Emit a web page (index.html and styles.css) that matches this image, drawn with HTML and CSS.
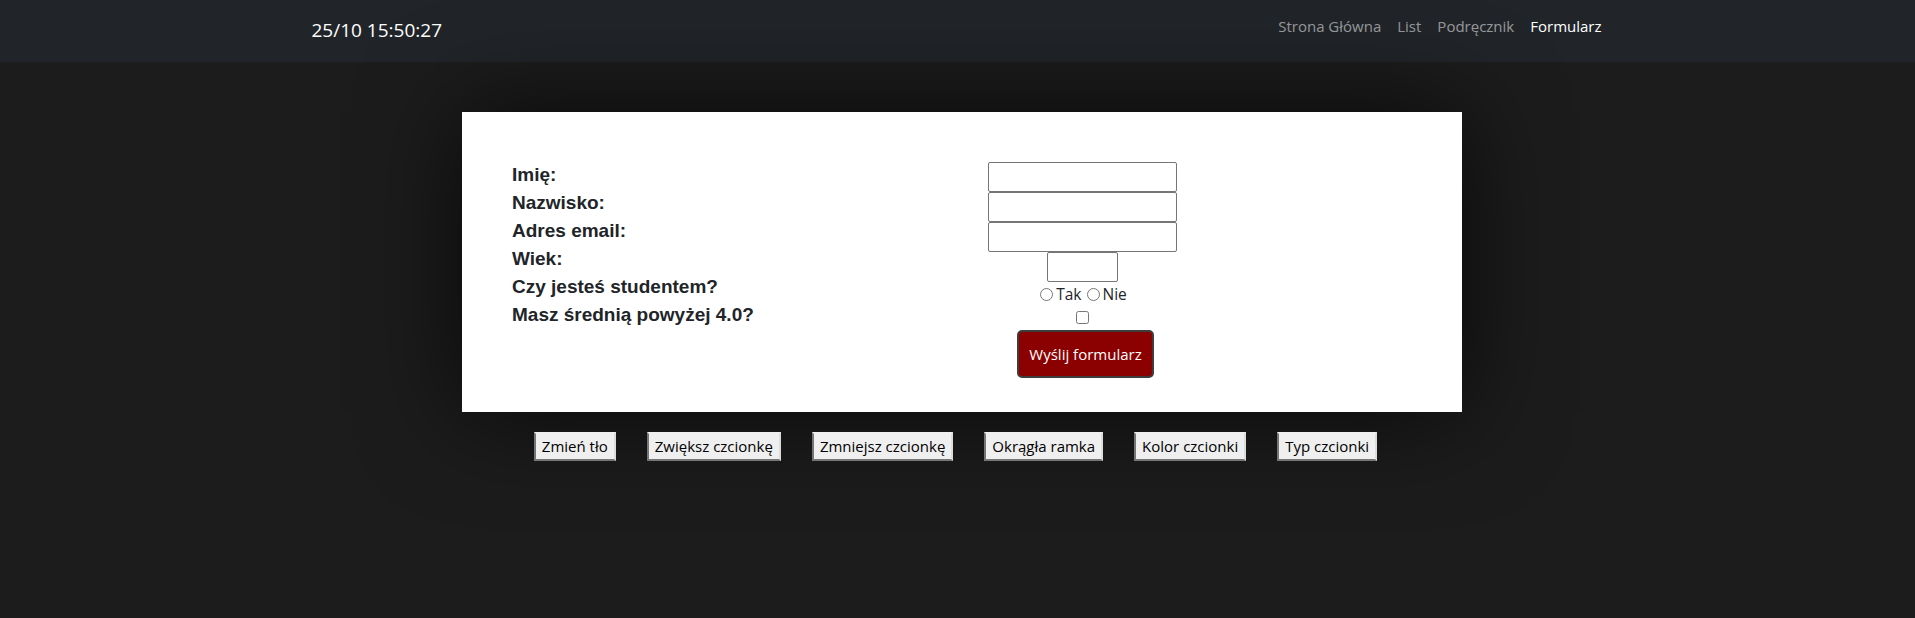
FILE: index.html
```html
<!DOCTYPE html>
<html lang="pl">
<head>
<meta charset="utf-8">
<title>Formularz</title>
<link rel="stylesheet" href="styles.css">
</head>
<body>
<nav class="navbar">
  <div class="nav-container">
    <div class="brand">25/10 15:50:27</div>
    <ul class="nav-links">
      <li><a class="nav-link" href="#">Strona Główna</a></li>
      <li><a class="nav-link" href="#">List</a></li>
      <li><a class="nav-link" href="#">Podręcznik</a></li>
      <li><a class="nav-link active" href="#">Formularz</a></li>
    </ul>
  </div>
</nav>
<main class="main">
  <form class="card">
    <div class="labels">
      <label class="lbl">Imię:</label>
      <label class="lbl">Nazwisko:</label>
      <label class="lbl">Adres email:</label>
      <label class="lbl">Wiek:</label>
      <label class="lbl">Czy jesteś studentem?</label>
      <label class="lbl">Masz średnią powyżej 4.0?</label>
    </div>
    <div class="fields">
      <input class="text-input" type="text">
      <input class="text-input" type="text">
      <input class="text-input" type="email">
      <input class="text-input age" type="number">
      <div class="radios">
        <label class="radio-opt"><input class="radio" type="radio" name="student">Tak</label>
        <label class="radio-opt"><input class="radio" type="radio" name="student">Nie</label>
      </div>
      <div class="check-row"><input class="check" type="checkbox"></div>
      <button class="submit" type="button">Wyślij formularz</button>
    </div>
  </form>
  <div class="tools">
    <button class="tool" type="button">Zmień tło</button>
    <button class="tool" type="button">Zwiększ czcionkę</button>
    <button class="tool" type="button">Zmniejsz czcionkę</button>
    <button class="tool" type="button">Okrągła ramka</button>
    <button class="tool" type="button">Kolor czcionki</button>
    <button class="tool" type="button">Typ czcionki</button>
  </div>
</main>
</body>
</html>
```
FILE: styles.css
```css
* { box-sizing: border-box; }

html, body {
  margin: 0;
  padding: 0;
}

body {
  background: #1c1c1c;
  font-family: "Open Sans", "Noto Sans", sans-serif;
  height: 618px;
  overflow: hidden;
}

.navbar {
  background: #212529;
  height: 62px;
}

.nav-container {
  width: 1320px;
  margin: 0 auto;
  padding: 14px 12px 0;
  display: flex;
  justify-content: space-between;
  align-items: flex-start;
}

.brand {
  color: #fff;
  font-size: 19px;
  line-height: 30px;
  padding-left: 2px;
  margin-top: 1px;
}

.nav-links {
  list-style: none;
  margin: 0 -4px 0 0;
  padding: 0;
  display: flex;
}

.nav-link {
  display: block;
  padding: 0 8px;
  font-size: 15px;
  line-height: 24px;
  color: rgba(255, 255, 255, 0.55);
  text-decoration: none;
}

.nav-link.active {
  color: #fff;
}

.main {
  display: flex;
  flex-direction: column;
}

.card {
  width: 1000px;
  height: 300px;
  margin: 50px 0 0 calc(50% - 495.5px);
  background: #fff;
  box-shadow: 0 0 100px rgba(0, 0, 0, 0.7);
  padding: 50px 47px 0 50px;
  display: grid;
  grid-template-columns: 238px 1fr;
  align-items: start;
}

.labels {
  display: flex;
  flex-direction: column;
  margin-top: -1px;
}

.lbl {
  font-family: "Liberation Sans", Arial, sans-serif;
  font-weight: bold;
  font-size: 19px;
  line-height: 28px;
  color: #212529;
  white-space: nowrap;
}

.fields {
  display: flex;
  flex-direction: column;
  align-items: center;
}

.text-input {
  display: block;
  width: 189px;
  height: 30px;
  margin: 0;
  border: 1px solid #767676;
  border-radius: 2px;
  background: #fff;
}

.text-input.age {
  width: 71px;
}

.radios {
  height: 24px;
  display: flex;
  align-items: center;
  font-size: 15.5px;
  color: #212529;
  margin-left: -3px;
}

.radio-opt {
  display: flex;
  align-items: center;
}

.radio {
  width: 13px;
  height: 13px;
  margin: 0 3px 0 5px;
}

.check-row {
  height: 24px;
}

.check {
  display: block;
  width: 13px;
  height: 13px;
  margin: 5px 0 0;
}

.submit {
  width: 137px;
  height: 48px;
  margin-left: 6px;
  background: #8b0000;
  color: #fff;
  border: 2px solid #3d3d3d;
  border-radius: 5px;
  font-family: "Open Sans", "Noto Sans", sans-serif;
  font-size: 15px;
  padding: 0;
}

.tools {
  display: flex;
  justify-content: center;
  gap: 31px;
  margin-top: 20px;
  padding-right: 4px;
}

.tool {
  font-family: "Open Sans", "Noto Sans", sans-serif;
  font-size: 15px;
  line-height: 21px;
  padding: 2px 6px;
  background: #efefef;
  color: #000;
  border: 2px solid;
  border-color: #efefef #dcdcdc #767676 #767676;
  border-radius: 0;
}
```
